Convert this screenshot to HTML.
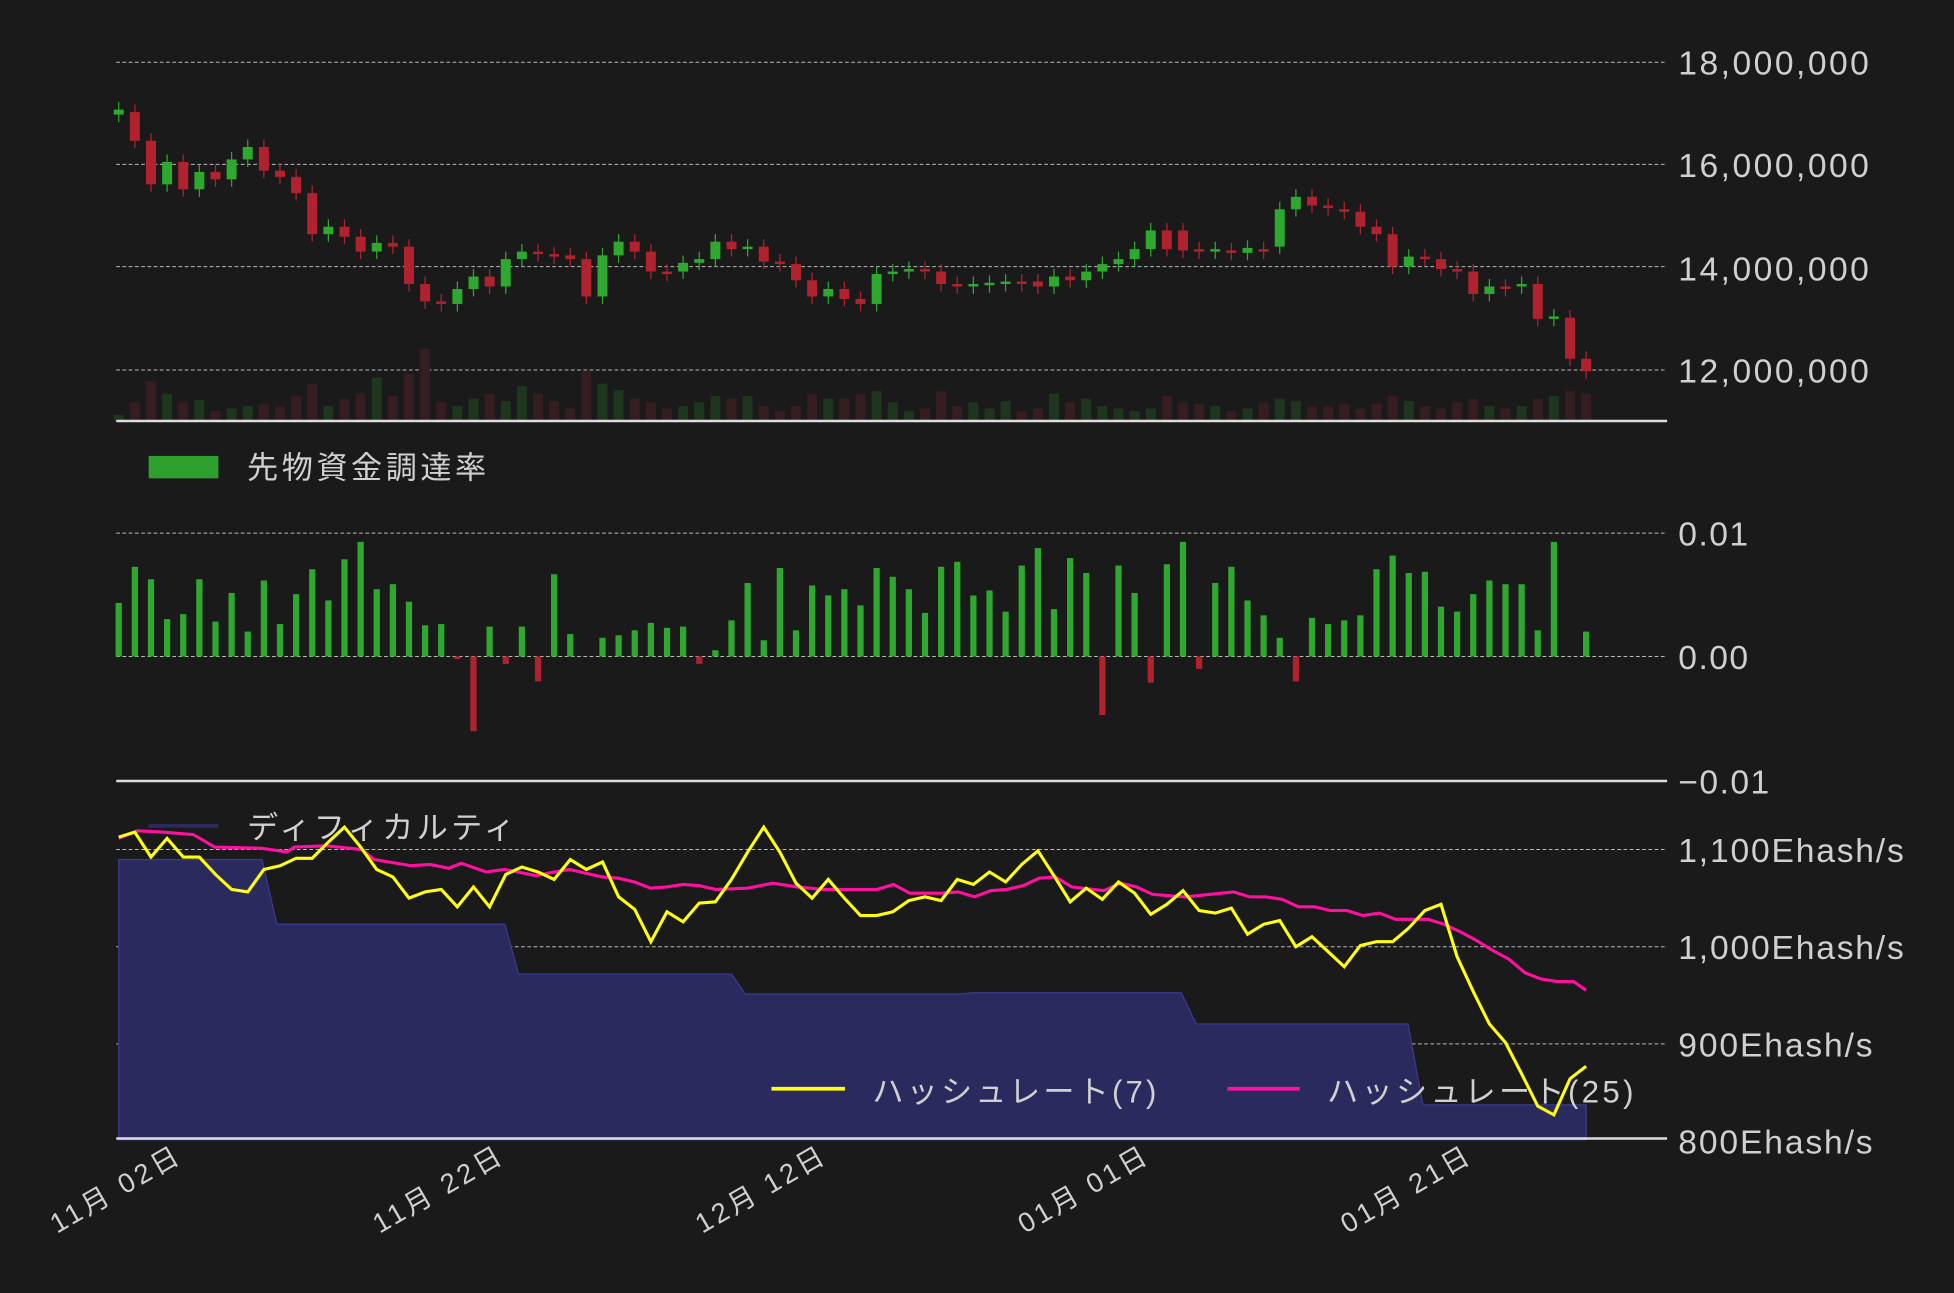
<!DOCTYPE html>
<html><head><meta charset="utf-8"><style>
html,body{margin:0;padding:0;background:#1a1a1a;}
svg{display:block}
text{font-family:"Liberation Sans","Noto Sans CJK JP",sans-serif;fill:#d0d0d0;}
</style></head><body>
<svg id="s" width="1954" height="1293" viewBox="0 0 1568 1038" xmlns="http://www.w3.org/2000/svg">
<rect width="1568" height="1038" fill="#1a1a1a"/>
<g id="grid" stroke="#bbb" stroke-width="0.8" stroke-dasharray="3,2">
<line x1="93" x2="1338" y1="50" y2="50"/><line x1="93" x2="1338" y1="132" y2="132"/>
<line x1="93" x2="1338" y1="214" y2="214"/><line x1="93" x2="1338" y1="297" y2="297"/>
<line x1="93" x2="1338" y1="428" y2="428"/><line x1="93" x2="1338" y1="527" y2="527"/>
<line x1="93" x2="1338" y1="682" y2="682"/><line x1="93" x2="1338" y1="760" y2="760"/>
<line x1="93" x2="1338" y1="838" y2="838"/>
</g>
<g id="vol"></g>
<g id="candles"></g>
<g id="fund"></g>
<polygon fill="#2b2a5e" stroke="#3a3a90" stroke-width="1" points="95,915 95,690 210,690 222,742 405,742 416,782 587,782 598,798 770,798 780,797 948,797 960,822 1130,822 1142,887 1273,887 1273,915"/>
<polyline id="mag" fill="none" stroke="#ff10a0" stroke-width="2.5"/>
<polyline id="yel" fill="none" stroke="#ffff10" stroke-width="2.5"/>
<g stroke="#ddd" stroke-width="2"><line x1="93" x2="1338" y1="338" y2="338"/><line x1="93" x2="1338" y1="627" y2="627"/><line x1="93" x2="1338" y1="914" y2="914"/></g>
<g font-size="27" lengthAdjust="spacingAndGlyphs">
<text x="1347" y="60" textLength="153">18,000,000</text><text x="1347" y="142" textLength="153">16,000,000</text>
<text x="1347" y="225" textLength="153">14,000,000</text><text x="1347" y="307" textLength="153">12,000,000</text>
<text x="1347" y="438" textLength="56">0.01</text><text x="1347" y="537" textLength="56">0.00</text><text x="1347" y="637" textLength="73">−0.01</text>
<text x="1347" y="692" textLength="181">1,100Ehash/s</text><text x="1347" y="770" textLength="181">1,000Ehash/s</text>
<text x="1347" y="848" textLength="156">900Ehash/s</text><text x="1347" y="926" textLength="156">800Ehash/s</text>
</g>
<rect x="119" y="366" width="56" height="18" fill="#2ea02e"/>
<text x="198" y="384" font-size="25" textLength="192">先物資金調達率</text>
<line x1="119" x2="175" y1="663" y2="663" stroke="#2b2a5e" stroke-width="3"/>
<text x="198" y="673" font-size="25" textLength="215">ディフィカルティ</text>
<line x1="619" x2="678" y1="874" y2="874" stroke="#ffff10" stroke-width="3"/>
<text x="700" y="885" font-size="25" textLength="228">ハッシュレート(7)</text>
<line x1="985" x2="1043" y1="874" y2="874" stroke="#ff10a0" stroke-width="3"/>
<text x="1065" y="885" font-size="25" textLength="246">ハッシュレート(25)</text>
<g font-size="22" text-anchor="end">
<text transform="translate(145,933) rotate(-30)" textLength="115">11月 02日</text>
<text transform="translate(404,933) rotate(-30)" textLength="115">11月 22日</text>
<text transform="translate(663,933) rotate(-30)" textLength="115">12月 12日</text>
<text transform="translate(922,933) rotate(-30)" textLength="115">01月 01日</text>
<text transform="translate(1181,933) rotate(-30)" textLength="115">01月 21日</text>
</g>
</svg>
<script>
var NS="http://www.w3.org/2000/svg";
function el(p,t,a){var e=document.createElementNS(NS,t);for(var k in a)e.setAttribute(k,a[k]);document.getElementById(p).appendChild(e);}
var c=[[92,88],[90,113],[113,148],[148,130],[130,152],[152,138],[138,144],[144,128],[128,118],[118,137],[137,142],[142,155],[155,188],[188,182],[182,190],[190,202],[202,195],[195,198],[198,228],[228,242],[242,244],[244,232],[232,222],[222,230],[230,208],[208,202],[202,204],[204,206],[205,208],[208,238],[238,205],[205,194],[194,202],[202,218],[218,219],[218,211],[211,208],[208,194],[194,200],[200,198],[198,210],[210,212],[212,225],[225,238],[238,232],[232,240],[240,244],[244,220],[220,218],[218,216],[216,218],[218,228],[228,230],[230,228],[228,227],[228,226],[226,227],[226,230],[230,222],[222,225],[225,218],[218,212],[212,208],[208,200],[200,185],[185,200],[185,201],[200,202],[202,200],[201,203],[203,199],[200,201],[198,168],[168,158],[158,165],[165,167],[168,170],[170,182],[182,188],[188,214],[214,206],[206,208],[208,216],[216,218],[218,236],[236,230],[230,231],[230,228],[228,256],[256,254],[255,288],[288,298]];
var n=c.length,dx=(1273-95)/(n-1);
var vh=[5,15,32,22,15,17,8,10,12,14,12,20,30,12,18,22,35,20,38,58,15,12,18,22,16,28,22,16,10,40,30,25,18,15,10,12,15,20,18,20,12,8,12,22,18,18,22,24,15,8,10,24,12,15,10,16,8,10,22,15,18,12,10,8,10,20,15,14,12,8,10,15,18,16,12,12,14,10,14,20,16,12,10,15,18,12,10,12,18,20,24,22];
c.forEach(function(d,i){var x=95+i*dx,up=d[1]<d[0],col=up?"#2ea82e":"#b0222e";
var t=Math.min(d[0],d[1]),b=Math.max(d[0],d[1]);if(b-t<2)b=t+2;
el("candles","line",{x1:x,x2:x,y1:t-6,y2:b+6,stroke:col,"stroke-width":1});
el("candles","rect",{x:x-4,y:t,width:8,height:b-t,fill:col});
var h=vh[i%vh.length];el("vol","rect",{x:x-4,y:338-h,width:8,height:h,fill:up?"#1d361d":"#361d20"});});
var f=[484,455,465,497,493,465,499,476,507,466,501,477,457,482,449,435,473,469,483,502,501,529,587,503,533,503,547,461,509,527,512,510,506,500,504,503,533,522,498,468,514,456,506,470,478,473,486,456,463,473,492,455,451,478,474,491,454,440,489,448,460,574,454,476,548,453,435,537,468,455,482,494,512,547,496,501,498,494,457,446,460,459,487,491,477,466,469,469,506,435,527,507];
f.forEach(function(y,i){var x=95+i*(1273-95)/(f.length-1);if(Math.abs(y-527)<1)return;
var neg=y>527;el("fund","rect",{x:x-2.5,y:Math.min(y,527),width:5,height:Math.abs(y-527),fill:neg?"#b0222e":"#2ea82e"});});
var Y=[672,668,688,673,688,688,702,714,716,698,695,689,689,676,664,680,698,704,721,716,714,728,712,728,702,696,700,706,690,698,692,720,730,756,732,740,725,724,706,684,664,684,709,721,706,721,735,735,732,723,720,723,706,710,700,708,694,683,703,724,713,722,708,717,734,726,715,731,733,729,750,742,739,760,752,764,776,759,756,756,745,731,726,768,796,822,837,862,888,895,866,856];
document.getElementById("yel").setAttribute("points",Y.map(function(y,i){return (95+i*(1273-95)/(Y.length-1)).toFixed(1)+","+y}).join(" "));
document.getElementById("mag").setAttribute("points","95,673 110,667 130,668 155,670 172,680 210,681 230,684 236,680 262,679 290,682 300,690 330,695 345,694 360,697 370,693 390,700 405,698 430,703 445,700 457,698 470,701 483,704 496,705 509,708 522,713 535,712 548,710 561,711 574,714 600,713 620,709 640,712 660,714 704,714 717,710 730,717 756,717 769,716 782,720 795,715 808,714 821,711 834,705 847,704 860,712 886,715 899,709 912,712 925,718 951,720 990,716 1003,720 1016,720 1029,722 1042,728 1055,728 1068,731 1081,731 1094,735 1107,733 1120,738 1146,738 1159,742 1172,748 1185,755 1198,763 1211,770 1224,781 1237,786 1250,788 1263,788 1273,795");
</script>
</body></html>
